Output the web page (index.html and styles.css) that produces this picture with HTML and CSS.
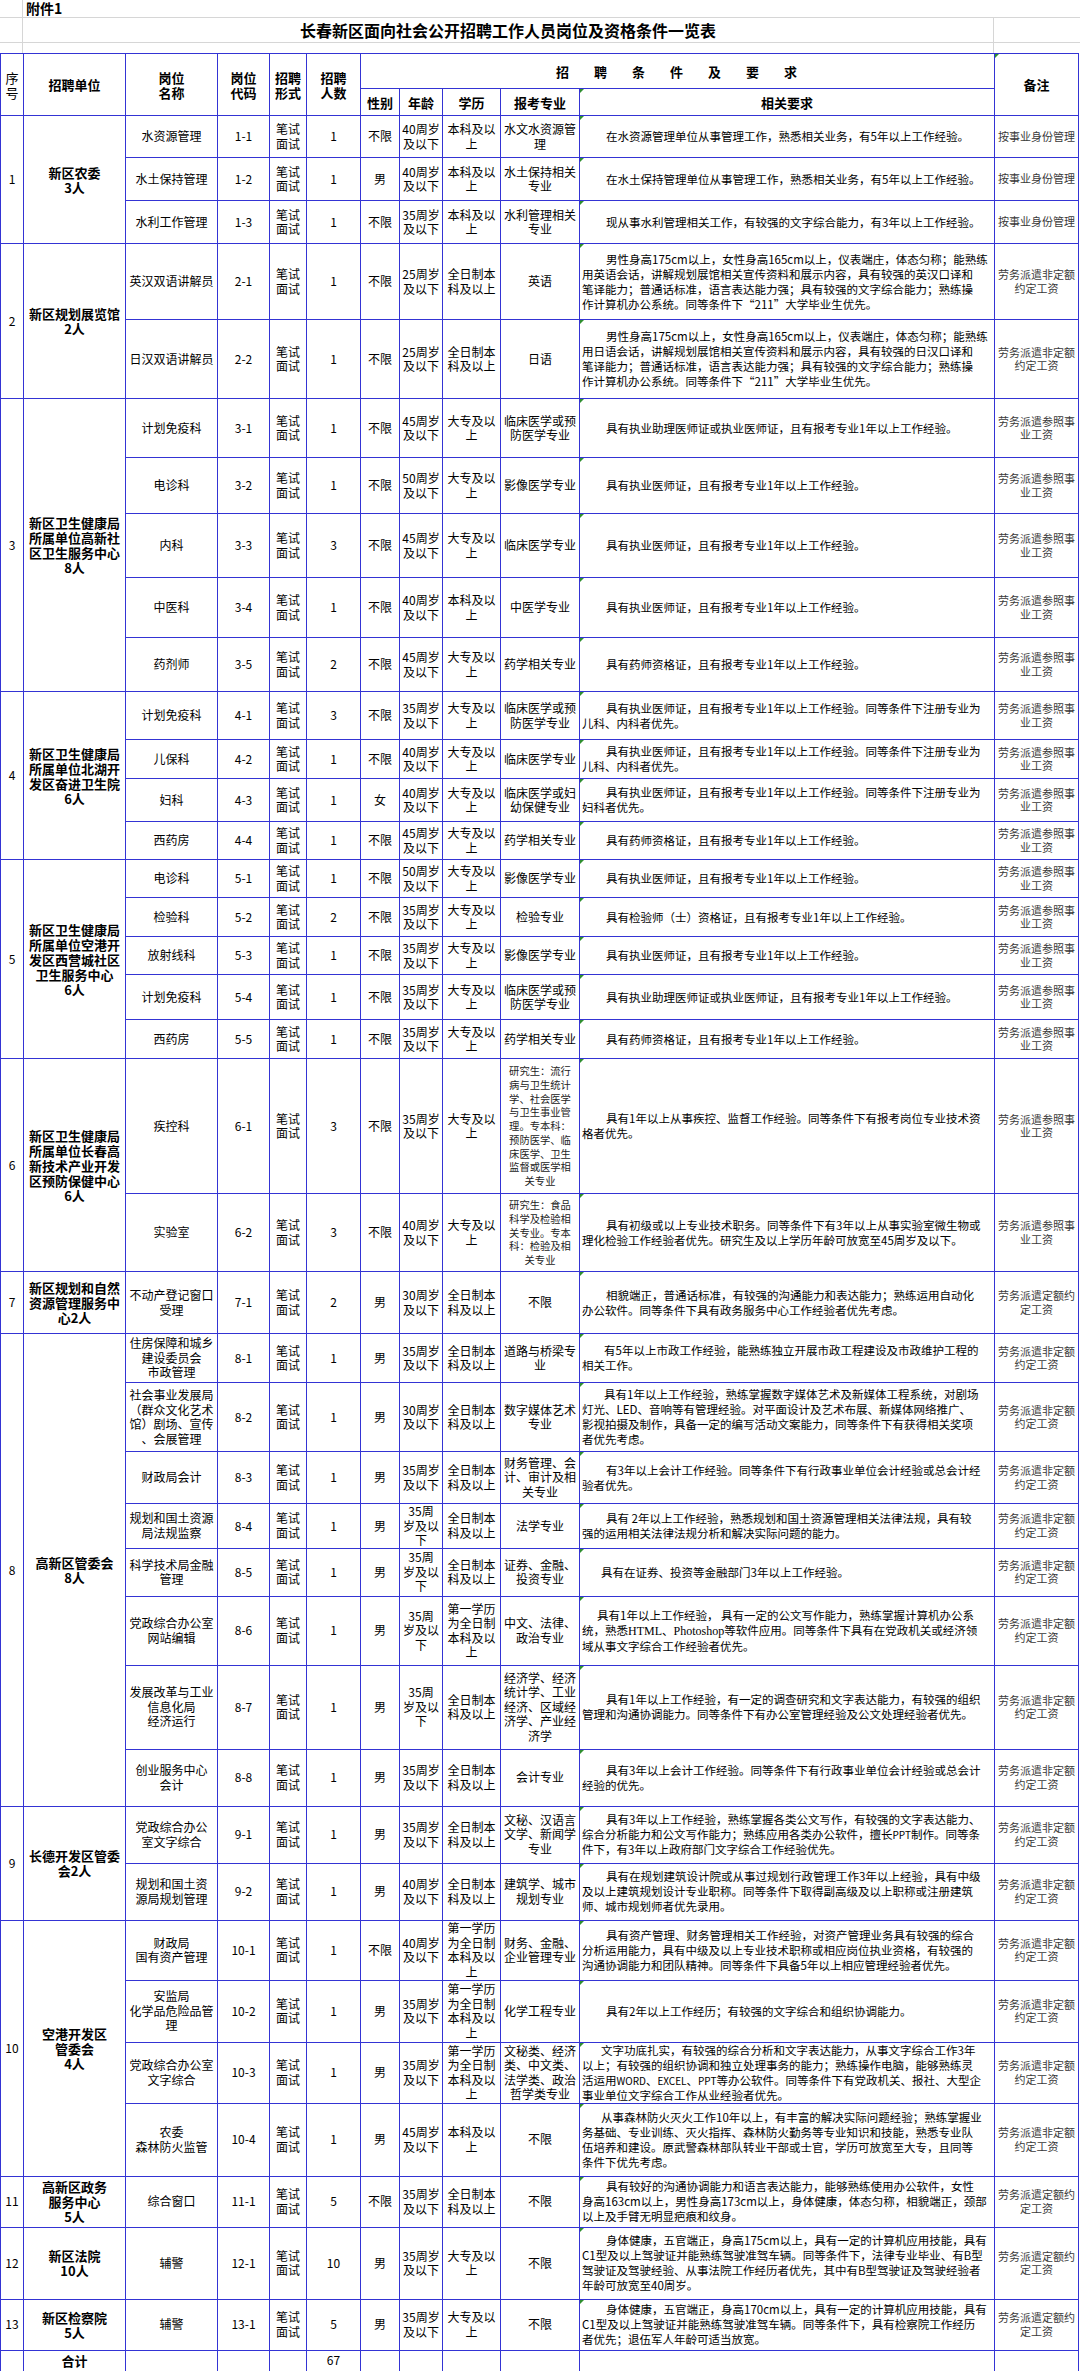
FILE: index.html
```html
<!DOCTYPE html>
<html lang="zh-CN">
<head>
<meta charset="utf-8">
<title>长春新区面向社会公开招聘工作人员岗位及资格条件一览表</title>
<link rel="stylesheet" href="styles.css">
</head>
<body>
<div class="pre">
  <div class="pre-cell idx r1"></div>
  <div class="pre-cell att r1">附件1</div>
  <div class="pre-cell idx r2"></div>
  <div class="pre-cell title r2">长春新区面向社会公开招聘工作人员岗位及资格条件一览表</div>
  <div class="pre-cell side r2"></div>
  <div class="pre-cell idx r3"></div>
  <div class="pre-cell mid r3"></div>
  <div class="pre-cell side r3"></div>
</div>
<table class="sheet">
  <colgroup>
    <col class="w1"><col class="w2"><col class="w3"><col class="w4"><col class="w5"><col class="w6">
    <col class="w7"><col class="w8"><col class="w9"><col class="w10"><col class="w11"><col class="w12">
  </colgroup>
  <thead>
    <tr class="h35">
      <th rowspan="2" class="hno">序<br>号</th>
      <th rowspan="2">招聘单位</th>
      <th rowspan="2">岗位<br>名称</th>
      <th rowspan="2">岗位<br>代码</th>
      <th rowspan="2">招聘<br>形式</th>
      <th rowspan="2">招聘<br>人数</th>
      <th colspan="5" class="spaced">招聘条件及要求</th>
      <th rowspan="2" class="tri">备注</th>
    </tr>
    <tr class="h27">
      <th>性别</th><th>年龄</th><th>学历</th><th>报考专业</th><th class="tri">相关要求</th>
    </tr>
  </thead>
  <tbody>
    <tr class="h42">
      <td class="no" rowspan="3">1</td><td class="unit" rowspan="3">新区农委<br>3人</td>
      <td>水资源管理</td><td>1-1</td><td>笔试<br>面试</td><td>1</td><td>不限</td><td>40周岁<br>及以下</td><td>本科及以<br>上</td><td>水文水资源管理</td>
      <td class="req tri">在水资源管理单位从事管理工作，熟悉相关业务，有5年以上工作经验。</td><td class="note">按事业身份管理</td>
    </tr>
    <tr class="h43">
      <td>水土保持管理</td><td>1-2</td><td>笔试<br>面试</td><td>1</td><td>男</td><td>40周岁<br>及以下</td><td>本科及以<br>上</td><td>水土保持相关专业</td>
      <td class="req tri">在水土保持管理单位从事管理工作，熟悉相关业务，有5年以上工作经验。</td><td class="note">按事业身份管理</td>
    </tr>
    <tr class="h43">
      <td>水利工作管理</td><td>1-3</td><td>笔试<br>面试</td><td>1</td><td>不限</td><td>35周岁<br>及以下</td><td>本科及以<br>上</td><td>水利管理相关专业</td>
      <td class="req tri">现从事水利管理相关工作，有较强的文字综合能力，有3年以上工作经验。</td><td class="note">按事业身份管理</td>
    </tr>

    <tr class="h76">
      <td class="no" rowspan="2">2</td><td class="unit" rowspan="2">新区规划展览馆<br>2人</td>
      <td>英汉双语讲解员</td><td>2-1</td><td>笔试<br>面试</td><td>1</td><td>不限</td><td>25周岁<br>及以下</td><td>全日制本<br>科及以上</td><td>英语</td>
      <td class="req tri">男性身高175cm以上，女性身高165cm以上，仪表端庄，体态匀称；能熟练<br>用英语会话，讲解规划展馆相关宣传资料和展示内容，具有较强的英汉口译和<br>笔译能力；普通话标准，语言表达能力强；具有较强的文字综合能力；熟练操<br>作计算机办公系统。同等条件下“211”大学毕业生优先。</td>
      <td class="note">劳务派遣非定额<br>约定工资</td>
    </tr>
    <tr class="h79">
      <td>日汉双语讲解员</td><td>2-2</td><td>笔试<br>面试</td><td>1</td><td>不限</td><td>25周岁<br>及以下</td><td>全日制本<br>科及以上</td><td>日语</td>
      <td class="req tri">男性身高175cm以上，女性身高165cm以上，仪表端庄，体态匀称；能熟练<br>用日语会话，讲解规划展馆相关宣传资料和展示内容，具有较强的日汉口译和<br>笔译能力；普通话标准，语言表达能力强；具有较强的文字综合能力；熟练操<br>作计算机办公系统。同等条件下“211”大学毕业生优先。</td>
      <td class="note">劳务派遣非定额<br>约定工资</td>
    </tr>

    <tr class="h59">
      <td class="no" rowspan="5">3</td><td class="unit" rowspan="5">新区卫生健康局<br>所属单位高新社<br>区卫生服务中心<br>8人</td>
      <td>计划免疫科</td><td>3-1</td><td>笔试<br>面试</td><td>1</td><td>不限</td><td>45周岁<br>及以下</td><td>大专及以<br>上</td><td>临床医学或预防医学专业</td>
      <td class="req tri">具有执业助理医师证或执业医师证，且有报考专业1年以上工作经验。</td><td class="note">劳务派遣参照事<br>业工资</td>
    </tr>
    <tr class="h56">
      <td>电诊科</td><td>3-2</td><td>笔试<br>面试</td><td>1</td><td>不限</td><td>50周岁<br>及以下</td><td>大专及以<br>上</td><td>影像医学专业</td>
      <td class="req tri">具有执业医师证，且有报考专业1年以上工作经验。</td><td class="note">劳务派遣参照事<br>业工资</td>
    </tr>
    <tr class="h64">
      <td>内科</td><td>3-3</td><td>笔试<br>面试</td><td>3</td><td>不限</td><td>45周岁<br>及以下</td><td>大专及以<br>上</td><td>临床医学专业</td>
      <td class="req tri">具有执业医师证，且有报考专业1年以上工作经验。</td><td class="note">劳务派遣参照事<br>业工资</td>
    </tr>
    <tr class="h60">
      <td>中医科</td><td>3-4</td><td>笔试<br>面试</td><td>1</td><td>不限</td><td>40周岁<br>及以下</td><td>本科及以<br>上</td><td>中医学专业</td>
      <td class="req tri">具有执业医师证，且有报考专业1年以上工作经验。</td><td class="note">劳务派遣参照事<br>业工资</td>
    </tr>
    <tr class="h54">
      <td>药剂师</td><td>3-5</td><td>笔试<br>面试</td><td>2</td><td>不限</td><td>45周岁<br>及以下</td><td>大专及以<br>上</td><td>药学相关专业</td>
      <td class="req tri">具有药师资格证，且有报考专业1年以上工作经验。</td><td class="note">劳务派遣参照事<br>业工资</td>
    </tr>

    <tr class="h48">
      <td class="no" rowspan="4">4</td><td class="unit" rowspan="4">新区卫生健康局<br>所属单位北湖开<br>发区奋进卫生院<br>6人</td>
      <td>计划免疫科</td><td>4-1</td><td>笔试<br>面试</td><td>3</td><td>不限</td><td>35周岁<br>及以下</td><td>大专及以<br>上</td><td>临床医学或预防医学专业</td>
      <td class="req tri">具有执业医师证，且有报考专业1年以上工作经验。同等条件下注册专业为<br>儿科、内科者优先。</td><td class="note">劳务派遣参照事<br>业工资</td>
    </tr>
    <tr class="h39">
      <td>儿保科</td><td>4-2</td><td>笔试<br>面试</td><td>1</td><td>不限</td><td>40周岁<br>及以下</td><td>大专及以<br>上</td><td>临床医学专业</td>
      <td class="req tri">具有执业医师证，且有报考专业1年以上工作经验。同等条件下注册专业为<br>儿科、内科者优先。</td><td class="note">劳务派遣参照事<br>业工资</td>
    </tr>
    <tr class="h43">
      <td>妇科</td><td>4-3</td><td>笔试<br>面试</td><td>1</td><td>女</td><td>40周岁<br>及以下</td><td>大专及以<br>上</td><td>临床医学或妇幼保健专业</td>
      <td class="req tri">具有执业医师证，且有报考专业1年以上工作经验。同等条件下注册专业为<br>妇科者优先。</td><td class="note">劳务派遣参照事<br>业工资</td>
    </tr>
    <tr class="h38">
      <td>西药房</td><td>4-4</td><td>笔试<br>面试</td><td>1</td><td>不限</td><td>45周岁<br>及以下</td><td>大专及以<br>上</td><td>药学相关专业</td>
      <td class="req tri">具有药师资格证，且有报考专业1年以上工作经验。</td><td class="note">劳务派遣参照事<br>业工资</td>
    </tr>

    <tr class="h38">
      <td class="no" rowspan="5">5</td><td class="unit" rowspan="5">新区卫生健康局<br>所属单位空港开<br>发区西营城社区<br>卫生服务中心<br>6人</td>
      <td>电诊科</td><td>5-1</td><td>笔试<br>面试</td><td>1</td><td>不限</td><td>50周岁<br>及以下</td><td>大专及以<br>上</td><td>影像医学专业</td>
      <td class="req tri">具有执业医师证，且有报考专业1年以上工作经验。</td><td class="note">劳务派遣参照事<br>业工资</td>
    </tr>
    <tr class="h39">
      <td>检验科</td><td>5-2</td><td>笔试<br>面试</td><td>2</td><td>不限</td><td>35周岁<br>及以下</td><td>大专及以<br>上</td><td>检验专业</td>
      <td class="req tri">具有检验师（士）资格证，且有报考专业1年以上工作经验。</td><td class="note">劳务派遣参照事<br>业工资</td>
    </tr>
    <tr class="h38">
      <td>放射线科</td><td>5-3</td><td>笔试<br>面试</td><td>1</td><td>不限</td><td>35周岁<br>及以下</td><td>大专及以<br>上</td><td>影像医学专业</td>
      <td class="req tri">具有执业医师证，且有报考专业1年以上工作经验。</td><td class="note">劳务派遣参照事<br>业工资</td>
    </tr>
    <tr class="h45">
      <td>计划免疫科</td><td>5-4</td><td>笔试<br>面试</td><td>1</td><td>不限</td><td>35周岁<br>及以下</td><td>大专及以<br>上</td><td>临床医学或预防医学专业</td>
      <td class="req tri">具有执业助理医师证或执业医师证，且有报考专业1年以上工作经验。</td><td class="note">劳务派遣参照事<br>业工资</td>
    </tr>
    <tr class="h39">
      <td>西药房</td><td>5-5</td><td>笔试<br>面试</td><td>1</td><td>不限</td><td>35周岁<br>及以下</td><td>大专及以<br>上</td><td>药学相关专业</td>
      <td class="req tri">具有药师资格证，且有报考专业1年以上工作经验。</td><td class="note">劳务派遣参照事<br>业工资</td>
    </tr>

    <tr class="h135">
      <td class="no" rowspan="2">6</td><td class="unit" rowspan="2">新区卫生健康局<br>所属单位长春高<br>新技术产业开发<br>区预防保健中心<br>6人</td>
      <td>疾控科</td><td>6-1</td><td>笔试<br>面试</td><td>3</td><td>不限</td><td>35周岁<br>及以下</td><td>大专及以<br>上</td>
      <td class="small">研究生：流行<br>病与卫生统计<br>学、社会医学<br>与卫生事业管<br>理。专本科：<br>预防医学、临<br>床医学、卫生<br>监督或医学相<br>关专业</td>
      <td class="req tri">具有1年以上从事疾控、监督工作经验。同等条件下有报考岗位专业技术资<br>格者优先。</td><td class="note">劳务派遣参照事<br>业工资</td>
    </tr>
    <tr class="h78">
      <td>实验室</td><td>6-2</td><td>笔试<br>面试</td><td>3</td><td>不限</td><td>40周岁<br>及以下</td><td>大专及以<br>上</td>
      <td class="small">研究生：食品<br>科学及检验相<br>关专业。专本<br>科：检验及相<br>关专业</td>
      <td class="req tri">具有初级或以上专业技术职务。同等条件下有3年以上从事实验室微生物或<br>理化检验工作经验者优先。研究生及以上学历年龄可放宽至45周岁及以下。</td><td class="note">劳务派遣参照事<br>业工资</td>
    </tr>

    <tr class="h62">
      <td class="no">7</td><td class="unit">新区规划和自然<br>资源管理服务中<br>心2人</td>
      <td>不动产登记窗口<br>受理</td><td>7-1</td><td>笔试<br>面试</td><td>2</td><td>男</td><td>30周岁<br>及以下</td><td>全日制本<br>科及以上</td><td>不限</td>
      <td class="req tri">相貌端正，普通话标准，有较强的沟通能力和表达能力；熟练运用自动化<br>办公软件。同等条件下具有政务服务中心工作经验者优先考虑。</td><td class="note">劳务派遣定额约<br>定工资</td>
    </tr>

    <tr class="h49">
      <td class="no" rowspan="8">8</td><td class="unit" rowspan="8">高新区管委会<br>8人</td>
      <td>住房保障和城乡<br>建设委员会<br>市政管理</td><td>8-1</td><td>笔试<br>面试</td><td>1</td><td>男</td><td>35周岁<br>及以下</td><td>全日制本<br>科及以上</td><td>道路与桥梁专业</td>
      <td class="req tri ind-m">有5年以上市政工作经验，能熟练独立开展市政工程建设及市政维护工程的<br>相关工作。</td><td class="note">劳务派遣非定额<br>约定工资</td>
    </tr>
    <tr class="h69">
      <td>社会事业发展局<br>（群众文化艺术<br>馆）剧场、宣传<br>、会展管理</td><td>8-2</td><td>笔试<br>面试</td><td>1</td><td>男</td><td>30周岁<br>及以下</td><td>全日制本<br>科及以上</td><td>数字媒体艺术专业</td>
      <td class="req tri ind-m">具有1年以上工作经验，熟练掌握数字媒体艺术及新媒体工程系统，对剧场<br>灯光、LED、音响等有管理经验。对平面设计及艺术布展、新媒体网络推广、<br>影视拍摄及制作，具备一定的编写活动文案能力，同等条件下有获得相关奖项<br>者优先考虑。</td><td class="note">劳务派遣非定额<br>约定工资</td>
    </tr>
    <tr class="h52">
      <td>财政局会计</td><td>8-3</td><td>笔试<br>面试</td><td>1</td><td>男</td><td>35周岁<br>及以下</td><td>全日制本<br>科及以上</td><td>财务管理、会计、审计及相关专业</td>
      <td class="req tri">有3年以上会计工作经验。同等条件下有行政事业单位会计经验或总会计经<br>验者优先。</td><td class="note">劳务派遣非定额<br>约定工资</td>
    </tr>
    <tr class="h44">
      <td>规划和国土资源<br>局法规监察</td><td>8-4</td><td>笔试<br>面试</td><td>1</td><td>男</td><td>35周<br>岁及以<br>下</td><td>全日制本<br>科及以上</td><td>法学专业</td>
      <td class="req tri">具有 2年以上工作经验，熟悉规划和国土资源管理相关法律法规，具有较<br>强的运用相关法律法规分析和解决实际问题的能力。</td><td class="note">劳务派遣非定额<br>约定工资</td>
    </tr>
    <tr class="h48">
      <td>科学技术局金融<br>管理</td><td>8-5</td><td>笔试<br>面试</td><td>1</td><td>男</td><td>35周<br>岁及以<br>下</td><td>全日制本<br>科及以上</td><td>证券、金融、投资专业</td>
      <td class="req tri ind-s">具有在证券、投资等金融部门3年以上工作经验。</td><td class="note">劳务派遣非定额<br>约定工资</td>
    </tr>
    <tr class="h69">
      <td>党政综合办公室<br>网站编辑</td><td>8-6</td><td>笔试<br>面试</td><td>1</td><td>男</td><td>35周<br>岁及以<br>下</td><td>第一学历<br>为全日制<br>本科及以<br>上</td><td>中文、法律、政治专业</td>
      <td class="req tri ind-xs">具有1年以上工作经验， 具有一定的公文写作能力，熟练掌握计算机办公系<br>统，熟悉<span class="latin">HTML</span>、<span class="latin">Photoshop</span>等软件应用。同等条件下具有在党政机关或经济领<br>域从事文字综合工作经验者优先。</td><td class="note">劳务派遣非定额<br>约定工资</td>
    </tr>
    <tr class="h84">
      <td>发展改革与工业<br>信息化局<br>经济运行</td><td>8-7</td><td>笔试<br>面试</td><td>1</td><td>男</td><td>35周<br>岁及以<br>下</td><td>全日制本<br>科及以上</td><td>经济学、经济统计学、工业经济、区域经济学、产业经济学</td>
      <td class="req tri">具有1年以上工作经验，有一定的调查研究和文字表达能力，有较强的组织<br>管理和沟通协调能力。同等条件下有办公室管理经验及公文处理经验者优先。</td><td class="note">劳务派遣非定额<br>约定工资</td>
    </tr>
    <tr class="h57">
      <td>创业服务中心<br>会计</td><td>8-8</td><td>笔试<br>面试</td><td>1</td><td>男</td><td>35周岁<br>及以下</td><td>全日制本<br>科及以上</td><td>会计专业</td>
      <td class="req tri">具有3年以上会计工作经验。同等条件下有行政事业单位会计经验或总会计<br>经验的优先。</td><td class="note">劳务派遣非定额<br>约定工资</td>
    </tr>

    <tr class="h57">
      <td class="no" rowspan="2">9</td><td class="unit" rowspan="2">长德开发区管委<br>会2人</td>
      <td>党政综合办公<br>室文字综合</td><td>9-1</td><td>笔试<br>面试</td><td>1</td><td>男</td><td>35周岁<br>及以下</td><td>全日制本<br>科及以上</td><td>文秘、汉语言文学、新闻学专业</td>
      <td class="req tri">具有3年以上工作经验，熟练掌握各类公文写作，有较强的文字表达能力、<br>综合分析能力和公文写作能力；熟练应用各类办公软件，擅长<span class="small-latin">PPT</span>制作。同等条<br>件下，有3年以上政府部门文字综合工作经验优先。</td><td class="note">劳务派遣非定额<br>约定工资</td>
    </tr>
    <tr class="h57">
      <td>规划和国土资<br>源局规划管理</td><td>9-2</td><td>笔试<br>面试</td><td>1</td><td>男</td><td>40周岁<br>及以下</td><td>全日制本<br>科及以上</td><td>建筑学、城市规划专业</td>
      <td class="req tri">具有在规划建筑设计院或从事过规划行政管理工作3年以上经验，具有中级<br>及以上建筑规划设计专业职称。同等条件下取得副高级及以上职称或注册建筑<br>师、城市规划师者优先录用。</td><td class="note">劳务派遣非定额<br>约定工资</td>
    </tr>

    <tr class="h60">
      <td class="no" rowspan="4">10</td><td class="unit" rowspan="4">空港开发区<br>管委会<br>4人</td>
      <td>财政局<br>国有资产管理</td><td>10-1</td><td>笔试<br>面试</td><td>1</td><td>不限</td><td>40周岁<br>及以下</td><td>第一学历<br>为全日制<br>本科及以<br>上</td><td>财务、金融、企业管理专业</td>
      <td class="req tri">具有资产管理、财务管理相关工作经验，对资产管理业务具有较强的综合<br>分析运用能力，具有中级及以上专业技术职称或相应岗位执业资格，有较强的<br>沟通协调能力和团队精神。同等条件下具备5年以上相应管理经验者优先。</td><td class="note">劳务派遣非定额<br>约定工资</td>
    </tr>
    <tr class="h62">
      <td>安监局<br>化学品危险品管<br>理</td><td>10-2</td><td>笔试<br>面试</td><td>1</td><td>男</td><td>35周岁<br>及以下</td><td>第一学历<br>为全日制<br>本科及以<br>上</td><td>化学工程专业</td>
      <td class="req tri">具有2年以上工作经历；有较强的文字综合和组织协调能力。</td><td class="note">劳务派遣非定额<br>约定工资</td>
    </tr>
    <tr class="h61">
      <td>党政综合办公室<br>文字综合</td><td>10-3</td><td>笔试<br>面试</td><td>1</td><td>男</td><td>35周岁<br>及以下</td><td>第一学历<br>为全日制<br>本科及以<br>上</td><td>文秘类、经济类、中文类、法学类、政治哲学类专业</td>
      <td class="req tri ind-s">文字功底扎实，有较强的综合分析和文字表达能力，从事文字综合工作3年<br>以上；有较强的组织协调和独立处理事务的能力；熟练操作电脑，能够熟练灵<br>活运用<span class="small-latin">WORD</span>、<span class="small-latin">EXCEL</span>、<span class="small-latin">PPT</span>等办公软件。同等条件下有党政机关、报社、大型企<br>事业单位文字综合工作从业经验者优先。</td><td class="note">劳务派遣非定额<br>约定工资</td>
    </tr>
    <tr class="h73">
      <td>农委<br>森林防火监管</td><td>10-4</td><td>笔试<br>面试</td><td>1</td><td>男</td><td>45周岁<br>及以下</td><td>本科及以<br>上</td><td>不限</td>
      <td class="req tri ind-s">从事森林防火灭火工作10年以上，有丰富的解决实际问题经验；熟练掌握业<br>务基础、专业训练、灭火指挥、森林防火勤务等专业知识和技能，熟悉专业队<br>伍培养和建设。原武警森林部队转业干部或士官，学历可放宽至大专，且同等<br>条件下优先考虑。</td><td class="note">劳务派遣非定额<br>约定工资</td>
    </tr>

    <tr class="h51">
      <td class="no">11</td><td class="unit">高新区政务<br>服务中心<br>5人</td>
      <td>综合窗口</td><td>11-1</td><td>笔试<br>面试</td><td>5</td><td>不限</td><td>35周岁<br>及以下</td><td>全日制本<br>科及以上</td><td>不限</td>
      <td class="req tri">具有较好的沟通协调能力和语言表达能力，能够熟练使用办公软件，女性<br>身高163cm以上，男性身高173cm以上，身体健康，体态匀称，相貌端正，颈部<br>以上及手臂无明显疤痕和纹身。</td><td class="note">劳务派遣定额约<br>定工资</td>
    </tr>
    <tr class="h72">
      <td class="no">12</td><td class="unit">新区法院<br>10人</td>
      <td>辅警</td><td>12-1</td><td>笔试<br>面试</td><td>10</td><td>男</td><td>35周岁<br>及以下</td><td>大专及以<br>上</td><td>不限</td>
      <td class="req tri">身体健康，五官端正，身高175cm以上，具有一定的计算机应用技能，具有<br>C1型及以上驾驶证并能熟练驾驶准驾车辆。同等条件下，法律专业毕业、有B型<br>驾驶证及驾驶经验、从事法院工作经历者优先，其中有B型驾驶证及驾驶经验者<br>年龄可放宽至40周岁。</td><td class="note">劳务派遣定额约<br>定工资</td>
    </tr>
    <tr class="h51">
      <td class="no">13</td><td class="unit">新区检察院<br>5人</td>
      <td>辅警</td><td>13-1</td><td>笔试<br>面试</td><td>5</td><td>男</td><td>35周岁<br>及以下</td><td>大专及以<br>上</td><td>不限</td>
      <td class="req tri">身体健康，五官端正，身高170cm以上，具有一定的计算机应用技能，具有<br>C1型及以上驾驶证并能熟练驾驶准驾车辆。同等条件下，具有检察院工作经历<br>者优先；退伍军人年龄可适当放宽。</td><td class="note">劳务派遣定额约<br>定工资</td>
    </tr>
    <tr class="h21">
      <td class="no"></td><td class="unit">合计</td><td></td><td></td><td></td><td>67</td><td></td><td></td><td></td><td></td><td class="req"></td><td class="note"></td>
    </tr>
  </tbody>
</table>
</body>
</html>
```

FILE: styles.css
```css
html, body {
  margin: 0;
  padding: 0;
  background: #ffffff;
}

body {
  width: 1080px;
  font-family: "Noto Sans CJK SC", "Noto Sans CJK JP", sans-serif;
  color: #000;
}

/* spreadsheet area above the table */
.pre {
  display: grid;
  grid-template-columns: 23px 971px 86px;
  grid-template-rows: 18px 25px 10px;
}

.pre-cell {
  border-bottom: 1px solid #d6d6d6;
  box-sizing: border-box;
}

.pre-cell.idx {
  border-right: 1px solid #d6d6d6;
}

.pre-cell.r1.att {
  grid-column: 2 / 4;
  font-size: 14px;
  font-weight: bold;
  line-height: 17px;
  padding-left: 3px;
}

.pre-cell.title {
  font-size: 16px;
  font-weight: bold;
  text-align: center;
  line-height: 24px;
  border-right: 1px solid #d6d6d6;
}

.pre-cell.mid {
  border-right: 1px solid #d6d6d6;
}

.pre-cell.r3 {
  border-bottom: none;
}

/* the main sheet */
.sheet {
  border-collapse: collapse;
  table-layout: fixed;
  width: 1079px;
}

.w1 { width: 23px; }
.w2 { width: 102px; }
.w3 { width: 92px; }
.w4 { width: 52px; }
.w5 { width: 37px; }
.w6 { width: 54px; }
.w7 { width: 39px; }
.w8 { width: 43px; }
.w9 { width: 58px; }
.w10 { width: 79px; }
.w11 { width: 415px; }
.w12 { width: 84px; }

.sheet th,
.sheet td {
  border: 1px solid #3434d4;
  padding: 0 2px;
  text-align: center;
  vertical-align: middle;
  font-size: 12px;
  line-height: 14.5px;
  font-weight: normal;
  overflow: hidden;
}

.sheet th {
  font-size: 13px;
  font-weight: bold;
  line-height: 15px;
}

.sheet th.hno {
  font-weight: normal;
  font-size: 13px;
}

.sheet th.spaced {
  letter-spacing: 25px;
  padding-left: 25px;
}

.sheet td.no {
  font-size: 12px;
  padding: 0;
}

.sheet td.unit {
  font-size: 13px;
  font-weight: bold;
  line-height: 15px;
}

.sheet td.small {
  font-size: 10.3px;
  line-height: 13.7px;
  color: #222;
}

.sheet td.req {
  text-align: left;
  font-size: 11.5px;
  line-height: 15px;
  text-indent: 24px;
  white-space: nowrap;
  padding: 0 0 0 2px;
}

.sheet td.req.ind-m { text-indent: 22px; }
.sheet td.req.ind-s { text-indent: 19px; }
.sheet td.req.ind-xs { text-indent: 15px; }

.latin {
  font-family: "Liberation Serif", serif;
  font-size: 12px;
}

.small-latin {
  font-size: 10px;
}

.sheet td.note {
  font-size: 11px;
  line-height: 13.5px;
  color: #3a3a3a;
  padding: 0 1px;
}

/* little green marker in cell corners */
.tri {
  position: relative;
}

.tri::before {
  content: "";
  position: absolute;
  top: 0;
  left: 0;
  width: 0;
  height: 0;
  border-top: 4px solid #2f8f2f;
  border-right: 4px solid transparent;
}

/* row heights (spreadsheet rows) */
.h21 { height: 21px; }
.h27 { height: 27px; }
.h35 { height: 35px; }
.h38 { height: 38px; }
.h39 { height: 39px; }
.h42 { height: 42px; }
.h43 { height: 43px; }
.h44 { height: 44px; }
.h45 { height: 45px; }
.h48 { height: 48px; }
.h49 { height: 49px; }
.h51 { height: 51px; }
.h52 { height: 52px; }
.h54 { height: 54px; }
.h56 { height: 56px; }
.h57 { height: 57px; }
.h59 { height: 59px; }
.h60 { height: 60px; }
.h61 { height: 61px; }
.h62 { height: 62px; }
.h64 { height: 64px; }
.h69 { height: 69px; }
.h72 { height: 72px; }
.h73 { height: 73px; }
.h76 { height: 76px; }
.h78 { height: 78px; }
.h79 { height: 79px; }
.h84 { height: 84px; }
.h135 { height: 135px; }
```
